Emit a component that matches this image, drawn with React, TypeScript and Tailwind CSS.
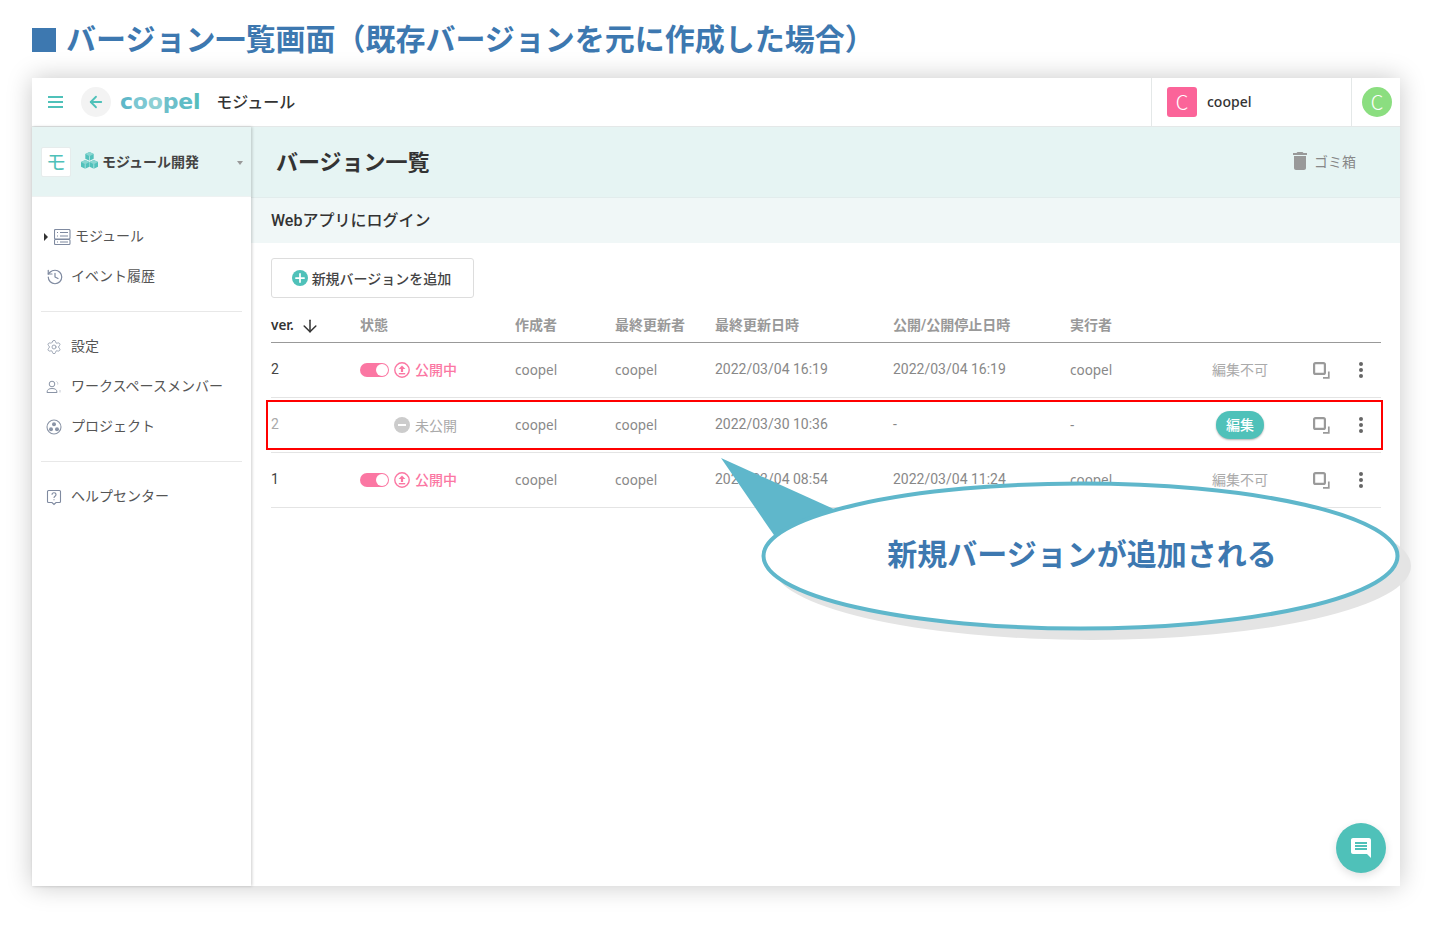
import { ArrowDown, ArrowLeft, History, Settings, Plus } from "lucide-react";

const rows = [
  { ver: "2", live: true, updated: "2022/03/04 16:19", pub: "2022/03/04 16:19", runner: "coopel" },
  { ver: "2", live: false, updated: "2022/03/30 10:36", pub: "-", runner: "-" },
  { ver: "1", live: true, updated: "2022/03/04 08:54", pub: "2022/03/04 11:24", runner: "coopel" },
];

const gridCols = "grid grid-cols-[89px_155px_100px_100px_178px_177px_120px_100px_62px_18px]";

function ModuleIcon() {
  return (
    <svg width="17" height="16" viewBox="0 0 17 16" fill="none" stroke="#7f8aa0" strokeWidth="1.1">
      <rect x="0.5" y="0.5" width="15.5" height="9.5" rx="1" />
      <rect x="0.5" y="10.5" width="15.5" height="5" rx="1" />
      <path d="M3 3.5h1M6 3.5h8M3 7h1M6 7h8M3 13h1M6 13h8" />
    </svg>
  );
}

function MembersIcon() {
  return (
    <svg width="16" height="16" viewBox="0 0 16 16" fill="none" stroke="#8a94a6" strokeWidth="1">
      <circle cx="6" cy="5" r="2.8" />
      <path d="M1 13.5c0-3 2-4 5-4s5 1 5 4z" />
      <path d="M10.5 2.5c1 .5 1.5 1.5 1.2 3M14 11v2.5" stroke="#c5cad3" />
    </svg>
  );
}

function ProjectIcon() {
  return (
    <svg width="16" height="16" viewBox="0 0 16 16" fill="none">
      <circle cx="8" cy="8" r="7" stroke="#8a94a6" strokeWidth="1.1" />
      <circle cx="8" cy="5.3" r="2" fill="#8a94a6" />
      <circle cx="5" cy="10.3" r="2" fill="#8a94a6" />
      <circle cx="11" cy="10.3" r="2" fill="#8a94a6" />
    </svg>
  );
}

function HelpIcon() {
  return (
    <svg width="16" height="17" viewBox="0 0 16 17" fill="none" stroke="#7f8aa0" strokeWidth="1.1">
      <path d="M2.5 1.5h11a1 1 0 0 1 1 1v10a1 1 0 0 1-1 1H10l-2 2-2-2H2.5a1 1 0 0 1-1-1v-10a1 1 0 0 1 1-1z" />
      <path d="M6 5.8c0-1.3 1-2 2-2s2 .7 2 1.9c0 1.6-2 1.6-2 3.2M8 10.3v1" />
    </svg>
  );
}

// three stacked isometric cubes
function CubesIcon() {
  const cube = (x: number, y: number) => (
    <g transform={`translate(${x} ${y})`}>
      <path d="M4.2 0L8.4 2.1v4.6L4.2 8.8 0 6.7V2.1z" fill="#52c1bb" />
      <path d="M4.2 0L8.4 2.1 4.2 4.2 0 2.1z" fill="#8ad6d1" />
      <path d="M4.2 4.2v4.6" stroke="#e6f4f3" strokeWidth="0.6" fill="none" />
    </g>
  );
  return (
    <svg width="17" height="17" viewBox="0 0 17 17">
      {cube(4.3, 0)}
      {cube(0, 8)}
      {cube(8.6, 8)}
    </svg>
  );
}

function CopyIcon() {
  return (
    <svg width="17" height="17" viewBox="0 0 17 17" fill="none" stroke="#9a9a9a" strokeWidth="2.2">
      <rect x="1.1" y="1.1" width="10.8" height="10.8" rx="1.5" />
      <path d="M15.8 9.5v6.3h-5.8" strokeWidth="1.7" />
    </svg>
  );
}

function MoreIcon() {
  return (
    <svg width="4" height="16" viewBox="0 0 4 16" fill="#666">
      <circle cx="2" cy="2" r="2" />
      <circle cx="2" cy="8" r="2" />
      <circle cx="2" cy="14" r="2" />
    </svg>
  );
}

function UploadCircle() {
  return (
    <svg width="16" height="16" viewBox="0 0 16 16" fill="none" stroke="#fb77a3">
      <circle cx="8" cy="8" r="7.2" strokeWidth="1.4" />
      <path d="M8 3.4l3.4 3.6H9.1v3H6.9V7H4.6z" fill="#fb77a3" stroke="none" />
      <path d="M4.8 11.7h6.4" strokeWidth="1.4" />
    </svg>
  );
}

function SideItem({ icon, label }: { icon: React.ReactNode; label: string }) {
  return (
    <div className="flex h-10 items-center pl-[14px] text-[14px] text-[#555]">
      <span className="flex w-[25px] shrink-0 items-center">{icon}</span>
      <span className="-mt-[2px]">{label}</span>
    </div>
  );
}

export default function App() {
  return (
    <div className="relative h-[929px] w-[1430px] overflow-hidden bg-white font-['Roboto','Noto_Sans_CJK_JP',sans-serif]">
      <div className="flex h-[78px] items-start pl-8 pt-[28px]">
        <div className="h-6 w-6 bg-[#3d78b0]" />
        <h1 className="-mt-[8px] ml-[10px] whitespace-nowrap text-[30px] leading-[40px] font-bold text-[#3d78b0]">
          バージョン一覧画面（既存バージョンを元に作成した場合）
        </h1>
      </div>

      <div className="ml-8 flex h-[808px] w-[1368px] flex-col bg-white shadow-[0_0_24px_rgba(0,0,0,0.22)]">
        {/* top bar */}
        <header className="flex h-[49px] shrink-0 items-center border-b border-[#e4e8e8]">
          <div className="ml-4 flex w-4 flex-col gap-[3px]">
            <span className="h-[2px] w-[15px] bg-[#4fc1b9]" />
            <span className="h-[2px] w-[15px] bg-[#4fc1b9]" />
            <span className="h-[2px] w-[15px] bg-[#4fc1b9]" />
          </div>
          <div className="ml-[17px] flex h-[30px] w-[30px] items-center justify-center rounded-full bg-[#f3f3f3]">
            <ArrowLeft size={18} strokeWidth={2.4} className="text-[#4fc1b9]" />
          </div>
          <div className="ml-[9px] font-['DejaVu_Sans',sans-serif] text-[22px] leading-none font-bold tracking-[-0.2px]">
            <span className="text-[#5fb8c9]">c</span>
            <span className="text-[#7cc7d2]">o</span>
            <span className="text-[#8ed0d4]">o</span>
            <span className="text-[#6cbfca]">p</span>
            <span className="text-[#5fbcc6]">e</span>
            <span className="text-[#56bdbb]">l</span>
          </div>
          <div className="ml-[16px] mt-[1px] text-[16px] font-medium text-[#333]">モジュール</div>
          <div className="ml-auto flex h-full">
            <div className="flex w-[201px] items-center gap-[10px] border-x border-[#e4e8e8] pl-[15px]">
              <div className="flex h-[30px] w-[30px] items-center justify-center rounded-[3px] bg-[#fb6499] font-['Noto_Sans_CJK_JP',sans-serif] text-[20px] font-light text-white">
                C
              </div>
              <span className="-mt-[1px] font-['Noto_Sans',sans-serif] text-[14px] font-medium text-[#333]">coopel</span>
            </div>
            <div className="flex w-[48px] items-center pl-[10px]">
              <div className="flex h-[30px] w-[30px] items-center justify-center rounded-full bg-[#8bde80] font-['Noto_Sans_CJK_JP',sans-serif] text-[20px] font-light text-white">
                C
              </div>
            </div>
          </div>
        </header>

        <div className="flex min-h-0 flex-1">
          {/* sidebar */}
          <aside className="z-10 flex w-[219px] shrink-0 flex-col bg-white shadow-[1px_0_3px_rgba(0,0,0,0.2)]">
            <div className="flex h-[70px] shrink-0 items-center border-b border-[#eef2f2] bg-[#e6f4f3] pl-[9px]">
              <div className="flex h-[30px] w-[30px] items-center justify-center rounded-[2px] border border-[#e6ecec] bg-white pt-[3px] text-[20px] text-[#4fc1b9]">
                モ
              </div>
              <span className="ml-[10px] -mt-[2px]">
                <CubesIcon />
              </span>
              <span className="ml-[4px] mt-[1px] text-[14px] font-bold text-[#444]">モジュール開発</span>
              <span className="ml-[38px] mt-[3px] h-0 w-0 border-x-[3px] border-t-[4px] border-x-transparent border-t-[#999]" />
            </div>
            <nav className="mt-[20px]">
              <div className="flex h-10 items-center pl-[12px] text-[14px] text-[#555]">
                <span className="h-0 w-0 border-y-[4px] border-l-[4px] border-y-transparent border-l-[#333]" />
                <span className="ml-[6px] mr-[4px]">
                  <ModuleIcon />
                </span>
                <span className="-mt-[2px]">モジュール</span>
              </div>
              <SideItem icon={<History size={18} strokeWidth={1.6} className="text-[#7f8aa0]" />} label="イベント履歴" />
            </nav>
            <div className="mx-[9px] mt-[14px] h-px bg-[#e8e8e8]" />
            <nav className="mt-[15px]">
              <SideItem icon={<Settings size={16} strokeWidth={1.2} className="text-[#8a94a6]" />} label="設定" />
              <SideItem icon={<MembersIcon />} label="ワークスペースメンバー" />
              <SideItem icon={<ProjectIcon />} label="プロジェクト" />
            </nav>
            <div className="mx-[9px] mt-[14px] h-px bg-[#e8e8e8]" />
            <nav className="mt-[15px]">
              <SideItem icon={<HelpIcon />} label="ヘルプセンター" />
            </nav>
          </aside>

          {/* main */}
          <main className="relative min-w-0 flex-1">
            <div className="flex h-[71px] items-center justify-between border-b border-[#e2ecec] bg-[#e6f4f3] pl-[25px] pr-[44px]">
              <h2 className="text-[22px] font-bold text-[#333]">バージョン一覧</h2>
              <div className="flex items-center gap-[2px] text-[14px] text-[#888]">
                <svg width="24" height="24" viewBox="0 0 24 24" fill="#999" className="-mt-[3px]">
                  <path d="M6 19c0 1.1.9 2 2 2h8c1.1 0 2-.9 2-2V7H6v12zM19 4h-3.5l-1-1h-5l-1 1H5v2h14V4z" />
                </svg>
                ゴミ箱
              </div>
            </div>
            <div className="flex h-[45px] items-center bg-[#f0f7f7] pl-[20px] text-[16px] font-medium text-[#333]">
              Webアプリにログイン
            </div>
            <div className="pl-[20px] pr-[19px] pt-[15px]">
              <button className="flex h-10 w-[203px] items-center justify-center rounded-[3px] border border-[#ddd] pr-[2px] text-[14px] font-medium text-[#444]">
                <span className="flex h-4 w-4 items-center justify-center rounded-full bg-[#4fc1b9]">
                  <Plus size={14} strokeWidth={3} className="text-white" />
                </span>
                <span className="ml-[4px] mt-[2px]">新規バージョンを追加</span>
              </button>

              <div className={`${gridCols} mt-[11px] h-[34px] items-center border-b border-[#999] text-[14px] font-bold text-[#999]`}>
                <div className="flex items-center font-['Noto_Sans',sans-serif] text-[13.5px] font-semibold text-[#333]">
                  ver.
                  <ArrowDown size={20} strokeWidth={1.8} className="ml-[6px] text-[#333]" />
                </div>
                <div>状態</div>
                <div>作成者</div>
                <div>最終更新者</div>
                <div>最終更新日時</div>
                <div>公開/公開停止日時</div>
                <div>実行者</div>
              </div>

              {rows.map((r, i) => (
                <div key={i} className={`${gridCols} h-[55px] items-center border-b border-[#e4e4e4] text-[14px] text-[#888]`}>
                  <div className={`-mt-[2px] ${r.live ? "text-[#444]" : "text-[#aaa]"}`}>{r.ver}</div>
                  <div className="flex items-center">
                    {r.live ? (
                      <>
                        <span className="flex h-[14px] w-[29px] items-center justify-end rounded-full bg-[#fb77a3] pr-px">
                          <span className="h-3 w-3 rounded-full bg-white" />
                        </span>
                        <span className="ml-[5px]">
                          <UploadCircle />
                        </span>
                        <span className="ml-[5px] mt-[1px] text-[14px] font-medium text-[#fb77a3]">公開中</span>
                      </>
                    ) : (
                      <>
                        <span className="ml-[34px] flex h-4 w-4 items-center justify-center rounded-full bg-[#ccc]">
                          <span className="h-[2px] w-2 bg-white" />
                        </span>
                        <span className="ml-[5px] mt-[2px] text-[14px] text-[#aaa]">未公開</span>
                      </>
                    )}
                  </div>
                  <div className="font-['Noto_Sans',sans-serif] text-[13.5px]">coopel</div>
                  <div className="font-['Noto_Sans',sans-serif] text-[13.5px]">coopel</div>
                  <div className="-mt-[2px]">{r.updated}</div>
                  <div className="-mt-[2px]">{r.pub}</div>
                  <div className="font-['Noto_Sans',sans-serif] text-[13.5px]">{r.runner}</div>
                  <div className="flex justify-center">
                    {r.live ? (
                      <span className="mt-[1px] text-[14px] text-[#aaa]">編集不可</span>
                    ) : (
                      <span className="flex h-7 w-12 items-center justify-center rounded-full bg-[#4fc1b9] text-[14px] font-medium text-white shadow-[0_1px_2px_rgba(0,0,0,0.3)]">
                        編集
                      </span>
                    )}
                  </div>
                  <div className="flex justify-center">
                    <CopyIcon />
                  </div>
                  <div className="flex justify-center">
                    <MoreIcon />
                  </div>
                </div>
              ))}
            </div>

            {/* chat button */}
            <button className="absolute bottom-[13px] right-[14px] flex h-[50px] w-[50px] items-center justify-center rounded-full bg-[#4fc1b9] shadow-[0_3px_8px_rgba(0,0,0,0.12)]">
              <svg width="24" height="24" viewBox="0 0 24 24" fill="#fff">
                <path d="M21.99 4c0-1.1-.89-2-1.99-2H4c-1.1 0-2 .9-2 2v12c0 1.1.9 2 2 2h14l4 4-.01-18zM18 14H6v-2h12v2zm0-3H6V9h12v2zm0-3H6V6h12v2z" />
              </svg>
            </button>
          </main>
        </div>
      </div>

      {/* annotation: red highlight and speech bubble */}
      <div className="absolute left-[266px] top-[400px] h-[50px] w-[1117px] border-2 border-[#f00]" />
      <svg className="absolute left-0 top-0" width="1430" height="929" viewBox="0 0 1430 929" fill="none">
        <ellipse cx="1092" cy="566" rx="319" ry="74" fill="#e4e4e4" />
        <path d="M721 458L836 510L776 538Z" fill="#5fb7cb" />
        <ellipse cx="1080.5" cy="556" rx="317" ry="72.5" fill="#fff" stroke="#5fb7cb" strokeWidth="4" />
      </svg>
      <div className="absolute left-[762px] top-[534px] w-[640px] text-center text-[30px] leading-[42px] font-bold text-[#3d78b0]">
        新規バージョンが追加される
      </div>
    </div>
  );
}
